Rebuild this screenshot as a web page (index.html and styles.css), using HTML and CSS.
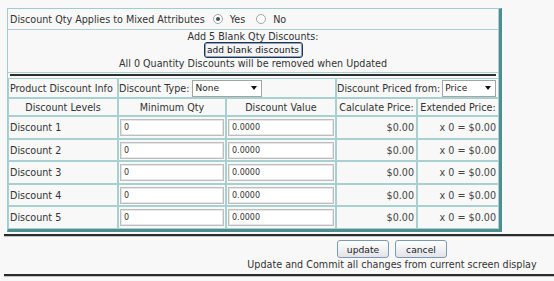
FILE: index.html
```html
<!DOCTYPE html>
<html>
<head>
<meta charset="utf-8">
<link rel="stylesheet" href="styles.css">
</head>
<body>
<div class="panel">
  <div class="row-a">
    <span>Discount Qty Applies to Mixed Attributes</span>
    <span class="radio checked"></span><span class="rlabel">Yes</span>
    <span class="radio second"></span><span class="rlabel">No</span>
  </div>
  <div class="row-b">
    <div class="l1">Add 5 Blank Qty Discounts:</div>
    <button class="btn-add">add blank discounts</button>
    <div class="l3">All 0 Quantity Discounts will be removed when Updated</div>
  </div>
  <div class="row-c"><div class="rule"></div></div>
  <div class="grid">
    <div class="cell">Product Discount Info</div>
    <div class="cell span2 tight">Discount Type:<span class="select sel-none">None<i class="arrow"></i></span></div>
    <div class="cell span2 tight">Discount Priced from:<span class="select sel-price">Price<i class="arrow"></i></span></div>

    <div class="cell c">Discount Levels</div>
    <div class="cell c">Minimum Qty</div>
    <div class="cell c">Discount Value</div>
    <div class="cell c">Calculate Price:</div>
    <div class="cell c">Extended Price:</div>

    <div class="cell">Discount 1</div>
    <div class="cell tight"><span class="input">0</span></div>
    <div class="cell tight"><span class="input">0.0000</span></div>
    <div class="cell r price">$0.00</div>
    <div class="cell r price">x 0 = $0.00</div>

    <div class="cell">Discount 2</div>
    <div class="cell tight"><span class="input">0</span></div>
    <div class="cell tight"><span class="input">0.0000</span></div>
    <div class="cell r price">$0.00</div>
    <div class="cell r price">x 0 = $0.00</div>

    <div class="cell">Discount 3</div>
    <div class="cell tight"><span class="input">0</span></div>
    <div class="cell tight"><span class="input">0.0000</span></div>
    <div class="cell r price">$0.00</div>
    <div class="cell r price">x 0 = $0.00</div>

    <div class="cell">Discount 4</div>
    <div class="cell tight"><span class="input">0</span></div>
    <div class="cell tight"><span class="input">0.0000</span></div>
    <div class="cell r price">$0.00</div>
    <div class="cell r price">x 0 = $0.00</div>

    <div class="cell">Discount 5</div>
    <div class="cell tight"><span class="input">0</span></div>
    <div class="cell tight"><span class="input">0.0000</span></div>
    <div class="cell r price">$0.00</div>
    <div class="cell r price">x 0 = $0.00</div>
  </div>
</div>
<div class="hr"></div>
<div class="actions">
  <div class="btns">
    <button class="btn">update</button>
    <button class="btn">cancel</button>
  </div>
  <div class="note">Update and Commit all changes from current screen display</div>
</div>
<div class="hr hr2"></div>
</body>
</html>
```
FILE: styles.css
```css
html, body {
  margin: 0;
  padding: 0;
  background: #f8f8f8;
}
body {
  font-family: "DejaVu Sans", Verdana, sans-serif;
  font-size: 9.6px;
  color: #333;
}

.panel {
  box-sizing: border-box;
  width: 495px;
  margin: 8px 0 0 7px;
  border-style: solid;
  border-width: 1px 3px 3px 1px;
  border-color: #9fcccc #4f8e8e #4f8e8e #9fcccc;
}

.row-a {
  box-sizing: border-box;
  height: 21px;
  display: flex;
  align-items: center;
  padding-left: 2px;
  border-right: 1px solid #a9d0d0;
  border-bottom: 1px solid #a9d0d0;
}
.radio {
  box-sizing: border-box;
  width: 10px;
  height: 10px;
  border-radius: 50%;
  border: 1px solid #9aa6a6;
  background: #fff;
  margin-left: 8px;
  display: flex;
  align-items: center;
  justify-content: center;
}
.radio.second { margin-left: 11px; }
.radio.checked::after {
  content: "";
  width: 4px;
  height: 4px;
  border-radius: 50%;
  background: #3f5252;
}
.rlabel { margin-left: 7px; }

.row-b {
  box-sizing: border-box;
  height: 43px;
  padding-top: 1px;
  text-align: center;
  border-right: 1px solid #a9d0d0;
  border-bottom: 1px solid #a9d0d0;
}
.row-b .l1 { line-height: 11px; height: 11px; }
.row-b .l3 { line-height: 12px; height: 12px; }
.btn-add {
  display: block;
  box-sizing: border-box;
  margin: 0 auto;
  width: 99px;
  height: 16px;
  padding: 0;
  font-family: "DejaVu Sans", Verdana, sans-serif;
  font-size: 9px;
  letter-spacing: 0.1px;
  color: #111;
  background: #f4f4f6;
  border: 1px solid #22344c;
  box-shadow: inset 0 0 0 1px #8aa4c0;
  border-radius: 3px;
}

.row-c {
  box-sizing: border-box;
  height: 5px;
  padding: 1px 2px 0 2px;
  border-right: 1px solid #a9d0d0;
}
.row-c .rule {
  height: 2px;
  background: #2e2e2e;
}

.grid {
  display: grid;
  grid-template-columns: 110px 108px 110px 81px 82px;
  grid-template-rows: 20px 18px 23px 22px 23px 22px 23px;
}
.cell {
  box-sizing: border-box;
  border: 1px solid #a9d0d0;
  display: flex;
  align-items: center;
  padding: 0 1px;
  white-space: nowrap;
  overflow: hidden;
}
.cell.tight { padding: 0 1px 0 0; }
.cell.span2 { grid-column: span 2; }
.cell.c { justify-content: center; }
.cell.r { justify-content: flex-end; padding-right: 2px; }
.price { color: #444; }

.grid .cell:nth-child(n+9):not(.tight):not(.r) { padding-left: 1px; }
.grid .cell.tight:has(.input) { padding: 0 1px; }

.select {
  box-sizing: border-box;
  display: inline-flex;
  align-items: center;
  justify-content: space-between;
  height: 17px;
  margin-left: 3px;
  padding: 0 4px 0 2px;
  border: 1px solid #a4a4a4;
  background: #fff;
  font-size: 9px;
  color: #222;
}
.sel-none { width: 70px; }
.sel-price { width: 54px; margin-left: 2px; }
.arrow {
  width: 0;
  height: 0;
  border-left: 3px solid transparent;
  border-right: 3px solid transparent;
  border-top: 4px solid #111;
}

.input {
  box-sizing: border-box;
  display: flex;
  align-items: center;
  width: 100%;
  height: 17px;
  padding-left: 3px;
  background: #fff;
  border: 1px solid #bdbdbd;
  box-shadow: inset 0 0 0 1px #e6e6e6;
  font-size: 8px;
  color: #333;
}

.hr {
  margin: 2px 0 0 4px;
  height: 0;
  border-top: 2px solid #2a2a2a;
  border-bottom: 1px solid #c4c4c4;
}
.hr2 { margin-top: 0; }

.actions {
  box-sizing: border-box;
  margin-left: 230px;
  height: 37px;
  padding-top: 3px;
  text-align: center;
}
.btns {
  display: flex;
  justify-content: center;
  gap: 6px;
}
.btn {
  box-sizing: border-box;
  width: 52px;
  height: 18px;
  padding: 0;
  font-family: "DejaVu Sans", Verdana, sans-serif;
  font-size: 9.2px;
  color: #222;
  border: 1px solid #7b98b8;
  border-radius: 3px;
  background: linear-gradient(#ffffff, #e2e4e8);
}
.note {
  line-height: 14px;
  height: 14px;
}
```
